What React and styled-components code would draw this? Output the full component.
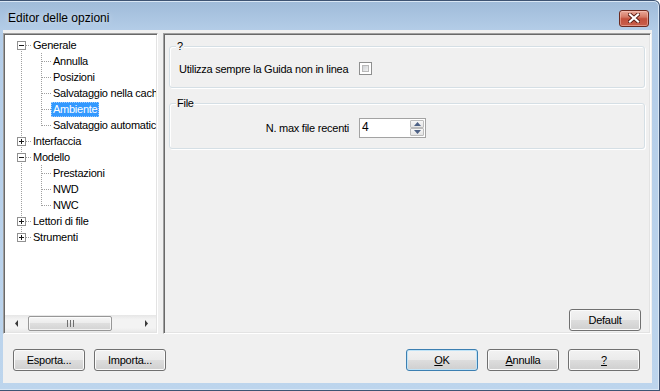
import React from "react";
import styled, { createGlobalStyle, css } from "styled-components";

const GlobalStyle = createGlobalStyle`
  html, body { margin: 0; padding: 0; background: #fff; }
  body {
    font-family: "Liberation Sans", Arial, sans-serif;
    font-size: 11px;
    letter-spacing: -0.25px;
    color: #000;
  }
`;

const sunken = css`
  box-sizing: border-box;
  border: 1px solid;
  border-color: #a0a0a0 #ffffff #ffffff #a0a0a0;
  box-shadow: inset 1px 1px 0 #696969, inset -1px -1px 0 #e3e3e3;
`;

const Window = styled.div`
  box-sizing: border-box;
  width: 660px;
  height: 391px;
  display: flex;
  flex-direction: column;
  border: 1px solid #3e5473;
  border-left: 0;
  border-top-right-radius: 6px;
  background: linear-gradient(to bottom, #9fbbd9 0px, #b4cde8 30px, #bdd5ed 100%);
  box-shadow: inset -1px 0 #d9e7f5, inset 0 1px #d9e7f5, inset 0 -1px #d9e7f5;
  overflow: hidden;
`;

const TitleBar = styled.div`
  box-sizing: border-box;
  height: 29px;
  padding: 5px 10px 0 8px;
  display: flex;
  align-items: center;
  justify-content: space-between;
`;

const Title = styled.span`
  font-size: 12px;
  letter-spacing: 0;
  color: #000;
  text-shadow: 0 0 6px rgba(255, 255, 255, 0.6);
`;

const CloseButton = styled.div`
  box-sizing: border-box;
  width: 30px;
  height: 17px;
  border: 1px solid #6b2a20;
  border-radius: 3px;
  background: linear-gradient(to bottom, #e9a999 0%, #d57a66 40%, #c2503c 52%, #c95f4b 100%);
  box-shadow: inset 0 0 0 1px rgba(255, 210, 200, 0.45);
  display: flex;
  align-items: center;
  justify-content: center;
`;

const Client = styled.div`
  flex: 1;
  margin: 0 7px 7px 3px;
  padding: 3px 1px 0 0;
  background: #f0f0f0;
  display: flex;
  flex-direction: column;
`;

const MainRow = styled.div`
  height: 301px;
  display: flex;
  gap: 5px;
`;

const TreePanel = styled.div`
  ${sunken};
  width: 155px;
  background: #fff;
  padding: 1px;
  display: flex;
  flex-direction: column;
  overflow: hidden;
`;

const TreeList = styled.div`
  flex: 1;
  padding: 2px 0 0 6px;
  overflow: hidden;
`;

const TreeRow = styled.div`
  height: 16px;
  display: flex;
  align-items: center;
  white-space: nowrap;
`;

const ConnectorSvg = styled.svg`
  flex: none;
  display: block;
`;

const NodeLabel = styled.span`
  box-sizing: border-box;
  height: 15px;
  line-height: 13px;
  padding: 0 1px;
  border: 1px dotted ${(p) => (p.$selected ? "#9ccbff" : "transparent")};
  background: ${(p) => (p.$selected ? "#3399ff" : "transparent")};
  color: ${(p) => (p.$selected ? "#fff" : "#000")};
`;

const HScroll = styled.div`
  height: 17px;
  flex: none;
  display: flex;
  background: linear-gradient(to bottom, #e6e6e6 0%, #f3f3f3 25%, #f3f3f3 75%, #e9e9e9 100%);
`;

const ScrollArrow = styled.div`
  width: ${(p) => p.$w}px;
  display: flex;
  align-items: center;
  justify-content: center;
`;

const ScrollTrack = styled.div`
  flex: 1;
  display: flex;
  padding: 1px 0;
`;

const ScrollThumb = styled.div`
  box-sizing: border-box;
  width: 84px;
  border: 1px solid #979797;
  border-radius: 2px;
  background: linear-gradient(to bottom, #f6f6f6 0%, #ececec 45%, #dedede 50%, #d3d3d3 100%);
  box-shadow: inset 0 0 0 1px rgba(255, 255, 255, 0.7);
  display: flex;
  align-items: center;
  justify-content: center;
`;

const OptionsPanel = styled.div`
  ${sunken};
  flex: 1;
  background: #f0f0f0;
  padding: 6px 5px 2px 5px;
  display: flex;
  flex-direction: column;
`;

const Group = styled.fieldset`
  margin: ${(p) => p.$top}px 0 0 0;
  padding: ${(p) => p.$pad};
  border: 1px solid #d5dfe5;
  border-radius: 3px;
  box-shadow: inset 1px 1px 0 #fff, 1px 1px 0 #fff;
  min-width: 0;
`;

const GroupTitle = styled.legend`
  padding: 0 1px;
  margin-left: -3px;
  line-height: 13px;
  background: #f0f0f0;
`;

const FieldGrid = styled.div`
  display: grid;
  grid-template-columns: 170px auto;
  column-gap: 10px;
  align-items: center;
`;

const FieldLabel = styled.span`
  text-align: ${(p) => p.$align};
  white-space: nowrap;
`;

const CheckBox = styled.span`
  box-sizing: border-box;
  width: 13px;
  height: 13px;
  border: 1px solid #8e8f8f;
  background: #fff;
  padding: 2px;
  display: flex;
  span {
    flex: 1;
    border: 1px solid #b9b9b9;
    background: linear-gradient(135deg, #d0d3d7 0%, #f1f1f1 100%);
  }
`;

const SpinBox = styled.div`
  box-sizing: border-box;
  width: 67px;
  height: 20px;
  border: 1px solid #a3a3a3;
  background: #fff;
  display: flex;
`;

const SpinValue = styled.span`
  flex: 1;
  padding: 1px 0 0 2px;
  line-height: 14px;
  font-size: 12px;
`;

const SpinButtons = styled.div`
  width: 14px;
  margin: 1px 1px 1px 0;
  display: flex;
  flex-direction: column;
`;

const SpinButton = styled.div`
  box-sizing: border-box;
  height: ${(p) => p.$h}px;
  border: 1px solid #bcbcbc;
  border-radius: 1px;
  background: linear-gradient(to bottom, #f7f7f7, #e4e4e4);
  display: flex;
  align-items: center;
  justify-content: center;
`;

const Filler = styled.div`
  flex: 1;
`;

const PanelFooter = styled.div`
  display: flex;
  justify-content: flex-end;
  padding-right: 4px;
`;

const ButtonRow = styled.div`
  display: flex;
  align-items: center;
  gap: 9px;
  padding: 15px 11px 0 10px;
`;

const Button = styled.button`
  box-sizing: border-box;
  width: 72px;
  height: 22px;
  padding: 0;
  font-family: "Liberation Sans", Arial, sans-serif;
  font-size: 11px;
  letter-spacing: -0.25px;
  color: #000;
  border: 1px solid ${(p) => (p.$primary ? "#3c7fb1" : "#707070")};
  border-radius: 3px;
  background: linear-gradient(to bottom, #f2f2f2 0%, #ebebeb 48%, #dddddd 52%, #cfcfcf 100%);
  box-shadow: inset 0 0 0 1px ${(p) => (p.$primary ? "#bfe3f7" : "#fbfbfb")};
`;

const treeItems = [
  { label: "Generale", cols: [{ kind: "start", box: "minus" }] },
  { label: "Annulla", cols: [{ kind: "pass" }, { kind: "tee" }] },
  { label: "Posizioni", cols: [{ kind: "pass" }, { kind: "tee" }] },
  { label: "Salvataggio nella cache", cols: [{ kind: "pass" }, { kind: "tee" }] },
  { label: "Ambiente", cols: [{ kind: "pass" }, { kind: "tee" }], selected: true },
  { label: "Salvataggio automatico", cols: [{ kind: "pass" }, { kind: "end" }] },
  { label: "Interfaccia", cols: [{ kind: "tee", box: "plus" }] },
  { label: "Modello", cols: [{ kind: "tee", box: "minus" }] },
  { label: "Prestazioni", cols: [{ kind: "pass" }, { kind: "tee" }] },
  { label: "NWD", cols: [{ kind: "pass" }, { kind: "tee" }] },
  { label: "NWC", cols: [{ kind: "pass" }, { kind: "end" }] },
  { label: "Lettori di file", cols: [{ kind: "tee", box: "plus" }] },
  { label: "Strumenti", cols: [{ kind: "end", box: "plus" }] },
];

const DOT = "#a0a0a0";

function Connector({ kind, box }) {
  const top = kind === "start" ? 8 : 0;
  const bottom = kind === "end" ? 9 : 16;
  return (
    <ConnectorSvg width="20" height="16" viewBox="0 0 20 16">
      <line x1="10.5" y1={top} x2="10.5" y2={bottom} stroke={DOT} strokeDasharray="1 1" />
      {kind !== "pass" && (
        <line x1="11" y1="8.5" x2="20" y2="8.5" stroke={DOT} strokeDasharray="1 1" />
      )}
      {box && (
        <g>
          <rect x="6.5" y="4.5" width="8" height="8" fill="#fff" stroke="#919191" />
          <line x1="8" y1="8.5" x2="13" y2="8.5" stroke="#1a1a1a" />
          {box === "plus" && <line x1="10.5" y1="6" x2="10.5" y2="11" stroke="#1a1a1a" />}
        </g>
      )}
    </ConnectorSvg>
  );
}

function CloseGlyph() {
  return (
    <svg width="12" height="10" viewBox="0 0 12 10">
      <path d="M2 1.5 L10 8.5 M10 1.5 L2 8.5" stroke="#5a1e16" strokeWidth="4" strokeLinecap="square" />
      <path d="M2 1.5 L10 8.5 M10 1.5 L2 8.5" stroke="#fff" strokeWidth="2.2" strokeLinecap="square" />
    </svg>
  );
}

function Arrow({ dir }) {
  const d = dir === "left" ? "M3 0 L0 3.5 L3 7 Z" : "M0 0 L3 3.5 L0 7 Z";
  return (
    <svg width="4" height="7" viewBox="0 0 4 7">
      <path d={d} fill="#3a3a3a" />
    </svg>
  );
}

function Grip() {
  return (
    <svg width="7" height="7" viewBox="0 0 7 7">
      {[0, 3, 6].map((x) => (
        <rect key={x} x={x} y="0" width="1" height="7" fill="#6f6f6f" />
      ))}
    </svg>
  );
}

function SpinArrow({ up }) {
  return (
    <svg width="7" height="4" viewBox="0 0 7 4">
      <path d={up ? "M0 4 L3.5 0 L7 4 Z" : "M0 0 L3.5 4 L7 0 Z"} fill="#4d6185" />
    </svg>
  );
}

export default function App() {
  return (
    <>
      <GlobalStyle />
      <Window>
        <TitleBar>
          <Title>Editor delle opzioni</Title>
          <CloseButton>
            <CloseGlyph />
          </CloseButton>
        </TitleBar>
        <Client>
          <MainRow>
            <TreePanel>
              <TreeList>
                {treeItems.map((item) => (
                  <TreeRow key={item.label}>
                    {item.cols.map((c, i) => (
                      <Connector key={i} kind={c.kind} box={c.box} />
                    ))}
                    <NodeLabel $selected={item.selected}>{item.label}</NodeLabel>
                  </TreeRow>
                ))}
              </TreeList>
              <HScroll>
                <ScrollArrow $w={23}>
                  <Arrow dir="left" />
                </ScrollArrow>
                <ScrollTrack>
                  <ScrollThumb>
                    <Grip />
                  </ScrollThumb>
                </ScrollTrack>
                <ScrollArrow $w={19}>
                  <Arrow dir="right" />
                </ScrollArrow>
              </HScroll>
            </TreePanel>
            <OptionsPanel>
              <Group $top={0} $pad="9px 9px 12px 9px">
                <GroupTitle>?</GroupTitle>
                <FieldGrid>
                  <FieldLabel $align="left">Utilizza sempre la Guida non in linea</FieldLabel>
                  <CheckBox>
                    <span />
                  </CheckBox>
                </FieldGrid>
              </Group>
              <Group $top={9} $pad="8px 9px 10px 9px">
                <GroupTitle>File</GroupTitle>
                <FieldGrid>
                  <FieldLabel $align="right">N. max file recenti</FieldLabel>
                  <SpinBox>
                    <SpinValue>4</SpinValue>
                    <SpinButtons>
                      <SpinButton $h={9}>
                        <SpinArrow up />
                      </SpinButton>
                      <SpinButton $h={8}>
                        <SpinArrow />
                      </SpinButton>
                    </SpinButtons>
                  </SpinBox>
                </FieldGrid>
              </Group>
              <Filler />
              <PanelFooter>
                <Button>Default</Button>
              </PanelFooter>
            </OptionsPanel>
          </MainRow>
          <ButtonRow>
            <Button>Esporta...</Button>
            <Button>Importa...</Button>
            <Filler />
            <Button $primary>
              <u>O</u>K
            </Button>
            <Button>
              <u>A</u>nnulla
            </Button>
            <Button>
              <u>?</u>
            </Button>
          </ButtonRow>
        </Client>
      </Window>
    </>
  );
}
